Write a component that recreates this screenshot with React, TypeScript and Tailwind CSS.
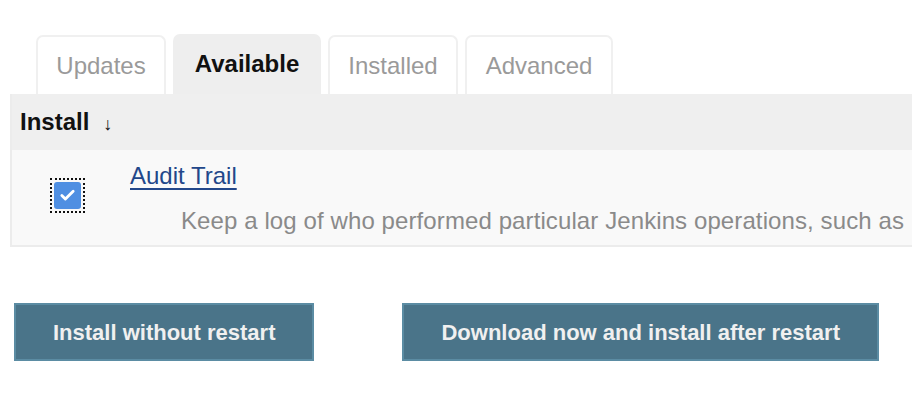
import { Check } from "lucide-react";

const tabs = [
  { label: "Updates", active: false, width: "w-[130px]" },
  { label: "Available", active: true, width: "w-[148px]" },
  { label: "Installed", active: false, width: "w-[130px]" },
  { label: "Advanced", active: false, width: "w-[148px]" },
];

const Tab = ({ label, active, width }: { label: string; active: boolean; width: string }) => (
  <div
    className={
      active
        ? `${width} h-[60px] flex items-center justify-center rounded-t-[7px] bg-[#eeeeee] text-[24px] font-bold text-[#111]`
        : `${width} h-[59px] flex items-center justify-center rounded-t-[7px] border-2 border-b-0 border-[#f0f0f0] bg-white text-[24px] text-[#9a9a9a]`
    }
  >
    {label}
  </div>
);

export default function App() {
  return (
    <div className="w-[912px] h-[400px] overflow-hidden bg-white font-['Liberation_Sans',Arial,sans-serif]">
      <div className="flex items-end gap-[7px] pt-[34px] pl-[36px]">
        {tabs.map((t) => (
          <Tab key={t.label} {...t} />
        ))}
      </div>

      <div className="ml-[10px] w-[1200px] border-2 border-t-0 border-[#ececec]">
        <div className="h-[56px] flex items-center gap-[14px] bg-[#efefef] pl-[8px]">
          <span className="text-[24px] font-bold text-[#111]">Install</span>
          <span className="text-[18px] text-[#111] mt-[4px]">↓</span>
        </div>
        <div className="flex h-[95px] bg-[#f9f9f9]">
          <div className="w-[118px] shrink-0 pl-[38px] pt-[28px]">
            <div className="w-[35px] h-[35px] border-2 border-dotted border-[#111] flex items-center justify-center">
              <div className="w-[27px] h-[27px] rounded-[3px] bg-[#4f8fe2] flex items-center justify-center">
                <Check className="w-[17px] h-[17px] text-white" strokeWidth={4} />
              </div>
            </div>
          </div>
          <div className="pt-[12px] flex flex-col">
            <a href="#" className="text-[24px] leading-[28px] text-[#22478a] underline underline-offset-[4px] self-start">
              Audit Trail
            </a>
            <p className="mt-[17px] ml-[51px] whitespace-nowrap text-[24px] leading-[28px] tracking-[0.1px] text-[#8a8a8a]">
              Keep a log of who performed particular Jenkins operations, such as
            </p>
          </div>
        </div>
      </div>

      <div className="mt-[56px] ml-[14px] flex gap-[88px]">
        <button className="h-[58px] px-[37px] border-2 border-[#5b8ca3] bg-[#4a7489] text-[22px] font-bold text-[#f0f0f0]">
          Install without restart
        </button>
        <button className="h-[58px] px-[37px] border-2 border-[#5b8ca3] bg-[#4a7489] text-[22px] font-bold text-[#f0f0f0]">
          Download now and install after restart
        </button>
      </div>
    </div>
  );
}
